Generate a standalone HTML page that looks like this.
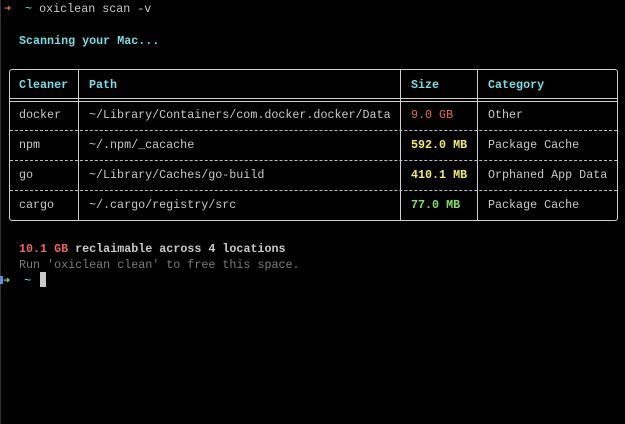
<!DOCTYPE html>
<html><head><meta charset="utf-8"><style>
html,body{margin:0;padding:0;background:#000;width:625px;height:424px;overflow:hidden}
body{position:relative;font-family:"Liberation Mono",monospace;font-size:11.7px;color:#c9c9c9}
.t{position:absolute;white-space:pre;line-height:16px}
.c{color:#76dfe6;font-weight:bold}
.r{color:#e9695c}
.y{color:#f2ee5c;font-weight:bold}
.g{color:#84e25f;font-weight:bold}
.d{color:#7b7b7b}
.b{font-weight:bold}
.h{position:absolute;height:0;border-top:1px solid #cfcfcf}
.hd{position:absolute;height:0;border-top:1px dashed #bdbdbd}
.v{position:absolute;width:0;border-left:1px solid #cfcfcf}
</style></head><body>
<div style="position:absolute;left:0;top:0;width:1px;height:424px;background:#333"></div>
<div class="t" style="left:4px;top:1px"><span class="r">➜</span>  <span style="color:#76dfe6">~</span> oxiclean scan -v</div>
<div class="t c" style="left:19px;top:33px">Scanning your Mac...</div>

<div style="position:absolute;left:9px;top:69px;width:607px;height:150px;border:1px solid #cfcfcf;border-radius:3px"></div>
<div class="h" style="left:10px;top:98px;width:607px"></div>
<div class="h" style="left:10px;top:101px;width:607px"></div>
<div class="hd" style="left:10px;top:130px;width:607px"></div>
<div class="hd" style="left:10px;top:160px;width:607px"></div>
<div class="hd" style="left:10px;top:190px;width:607px"></div>
<div class="v" style="left:78px;top:70px;height:150px"></div>
<div class="v" style="left:400px;top:70px;height:150px"></div>
<div class="v" style="left:477px;top:70px;height:150px"></div>

<div class="t c" style="left:19px;top:77px">Cleaner</div>
<div class="t c" style="left:89px;top:77px">Path</div>
<div class="t c" style="left:411px;top:77px">Size</div>
<div class="t c" style="left:488px;top:77px">Category</div>

<div class="t" style="left:19px;top:107px">docker</div>
<div class="t" style="left:89px;top:107px">~/Library/Containers/com.docker.docker/Data</div>
<div class="t r" style="left:411px;top:107px">9.0 GB</div>
<div class="t" style="left:488px;top:107px">Other</div>

<div class="t" style="left:19px;top:137px">npm</div>
<div class="t" style="left:89px;top:137px">~/.npm/_cacache</div>
<div class="t y" style="left:411px;top:137px">592.0 MB</div>
<div class="t" style="left:488px;top:137px">Package Cache</div>

<div class="t" style="left:19px;top:167px">go</div>
<div class="t" style="left:89px;top:167px">~/Library/Caches/go-build</div>
<div class="t y" style="left:411px;top:167px">410.1 MB</div>
<div class="t" style="left:488px;top:167px">Orphaned App Data</div>

<div class="t" style="left:19px;top:197px">cargo</div>
<div class="t" style="left:89px;top:197px">~/.cargo/registry/src</div>
<div class="t g" style="left:411px;top:197px">77.0 MB</div>
<div class="t" style="left:488px;top:197px">Package Cache</div>

<div class="t" style="left:19px;top:241px"><span class="r b">10.1 GB</span><span class="b"> reclaimable across 4 locations</span></div>
<div class="t d" style="left:19px;top:257px">Run 'oxiclean clean' to free this space.</div>
<div style="position:absolute;left:0;top:276px;width:3px;height:8px;background:#5c8fe0"></div>
<div class="t" style="left:3px;top:273px"><span class="g" style="font-weight:normal">➜</span>  <span style="color:#76dfe6">~</span></div>
<div style="position:absolute;left:40px;top:272px;width:6px;height:15px;background:#c9c9c9"></div>
</body></html>
